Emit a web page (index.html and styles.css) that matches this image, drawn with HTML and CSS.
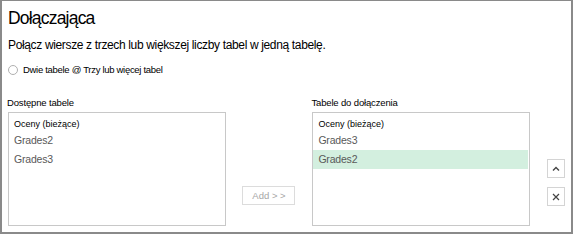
FILE: index.html
```html
<!DOCTYPE html>
<html lang="pl">
<head>
    <title>Dołączająca</title>
    <meta charset="UTF-8">
    <link rel="stylesheet" href="styles.css">
</head>
<body>
    <div class="frame">
        <h1 class="title">Dołączająca</h1>
        <p class="subtitle">Połącz wiersze z trzech lub większej liczby tabel w jedną tabelę.</p>
        <div class="radio-row">
            <span class="radio"></span>
            <span>Dwie tabele @ Trzy lub więcej tabel</span>
        </div>

        <div class="tables">
            <div class="col">
                <div class="label">Dostępne tabele</div>
                <div class="list">
                    <div class="item current">Oceny (bieżące)</div>
                    <div class="item">Grades2</div>
                    <div class="item">Grades3</div>
                </div>
            </div>
            <div class="middle">
                <div class="btn-add">Add &gt; &gt;</div>
            </div>
            <div class="col">
                <div class="label">Tabele do dołączenia</div>
                <div class="list">
                    <div class="item current">Oceny (bieżące)</div>
                    <div class="item">Grades3</div>
                    <div class="item selected">Grades2</div>
                </div>
            </div>
            <div class="side">
                <div class="btn-icon">
                    <svg width="10" height="10" viewBox="0 0 10 10"><path d="M2 6.5 L5 3.5 L8 6.5" fill="none" stroke="#444" stroke-width="1.4"/></svg>
                </div>
                <div class="btn-icon">
                    <svg width="10" height="10" viewBox="0 0 10 10"><path d="M2 2 L8 8 M8 2 L2 8" fill="none" stroke="#444" stroke-width="1.2"/></svg>
                </div>
            </div>
        </div>
    </div>
</body>
</html>
```

FILE: styles.css
```css
body {
    margin: 0;
    background: white;
    font-family: "Liberation Sans", Arial, sans-serif;
    color: #000;
}

.frame {
    box-sizing: border-box;
    width: 573px;
    height: 234px;
    border: 2px solid #8a8a8a;
    border-top-width: 1px;
    padding: 0 6px;
}

.title {
    margin: 4px 0 0 0;
    font-size: 17.5px;
    font-weight: normal;
    letter-spacing: -0.8px;
    line-height: 27px;
}

.subtitle {
    margin: 5px 0 0 0;
    font-size: 12px;
    letter-spacing: -0.35px;
    line-height: 16px;
}

.radio-row {
    display: flex;
    align-items: center;
    gap: 5px;
    margin-top: 10px;
    font-size: 9.5px;
    letter-spacing: -0.3px;
    line-height: 14px;
}

.radio {
    width: 8px;
    height: 8px;
    border: 1px solid #b0b0b0;
    border-radius: 50%;
}

.tables {
    display: flex;
    margin-top: 19px;
}

.col {
    width: 218px;
}

.label {
    font-size: 9.5px;
    letter-spacing: -0.15px;
    line-height: 14px;
    margin-bottom: 2px;
    margin-left: -1px;
}

.list {
    box-sizing: border-box;
    height: 114px;
    border: 1px solid #c8c8c8;
    padding: 4px 0 0 0;
}

.item {
    height: 19px;
    line-height: 19px;
    padding-left: 5px;
    font-size: 10.5px;
    letter-spacing: -0.2px;
    color: #595959;
}

.item.current {
    height: 14px;
    line-height: 14px;
    font-size: 9px;
    letter-spacing: 0;
    color: #000;
}

.item.selected {
    background: #d3efdf;
    margin-right: 1px;
}

.middle {
    width: 87px;
    display: flex;
    justify-content: center;
    align-items: flex-end;
    padding-bottom: 21px;
}

.btn-add {
    box-sizing: border-box;
    width: 53px;
    height: 19px;
    border: 1px solid #dcdcdc;
    font-size: 9.5px;
    line-height: 17px;
    text-align: center;
    color: #a6a6a6;
}

.side {
    display: flex;
    flex-direction: column;
    gap: 9px;
    margin-left: 17px;
    padding-top: 63px;
}

.btn-icon {
    box-sizing: border-box;
    width: 18px;
    height: 19px;
    border: 1px solid #d4d4d4;
    display: flex;
    align-items: center;
    justify-content: center;
}
```
